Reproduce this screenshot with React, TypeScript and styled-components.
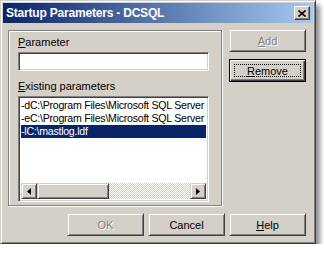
import React from "react";
import styled, { createGlobalStyle, css } from "styled-components";

const Global = createGlobalStyle`
  html, body { margin: 0; padding: 0; background: #ffffff; }
  body { font-family: "Liberation Sans", Arial, sans-serif; font-size: 11px; }
`;

const Window = styled.div`
  box-sizing: border-box;
  width: 316px;
  height: 244px;
  background: #d4d0c8;
  border-top: 1px solid #d4d0c8;
  border-left: 1px solid #d4d0c8;
  border-right: 1px solid #404040;
  border-bottom: 1px solid #404040;
  box-shadow: inset 1px 1px 0 #ffffff, inset -1px -1px 0 #808080, 4px 5px 5px rgba(0, 0, 0, 0.45);
  padding: 2px;
  display: flex;
  flex-direction: column;
`;

const TitleBar = styled.div`
  height: 20px;
  background: linear-gradient(to right, #0a246a, #a6caf0);
  display: flex;
  align-items: center;
  justify-content: space-between;
  padding: 0 3px 0 3px;
`;

const Title = styled.span`
  color: #ffffff;
  font-weight: bold;
  font-size: 12px;
  letter-spacing: -0.2px;
`;

const CloseBtn = styled.div`
  box-sizing: border-box;
  width: 16px;
  height: 14px;
  background: #d4d0c8;
  border-top: 1px solid #ffffff;
  border-left: 1px solid #ffffff;
  border-right: 1px solid #404040;
  border-bottom: 1px solid #404040;
  box-shadow: inset -1px -1px 0 #808080;
  display: flex;
  align-items: center;
  justify-content: center;
`;

const Content = styled.div`
  flex: 1;
  display: flex;
  flex-direction: column;
  padding: 5px 7px 0 5px;
`;

const TopRow = styled.div`
  display: flex;
  gap: 7px;
`;

const GroupBox = styled.div`
  box-sizing: border-box;
  width: 214px;
  height: 176px;
  margin-top: 2px;
  border: 1px solid #808080;
  box-shadow: 1px 1px 0 #ffffff, inset 1px 1px 0 #ffffff;
  padding: 5px 0 0 9px;
  display: flex;
  flex-direction: column;
`;

const Label = styled.div`
  color: #000000;
  height: 13px;
  line-height: 13px;
  margin-bottom: 3px;
  u { text-decoration: underline; }
`;

const sunken = css`
  box-sizing: border-box;
  background: #ffffff;
  border-top: 1px solid #808080;
  border-left: 1px solid #808080;
  border-right: 1px solid #ffffff;
  border-bottom: 1px solid #ffffff;
  box-shadow: inset 1px 1px 0 #404040, inset -1px -1px 0 #d4d0c8;
`;

const Input = styled.div`
  ${sunken};
  width: 191px;
  height: 19px;
  margin-bottom: 9px;
`;

const ListBox = styled.div`
  ${sunken};
  width: 191px;
  height: 106px;
  padding: 2px;
  display: flex;
  flex-direction: column;
  overflow: hidden;
`;

const Items = styled.div`
  flex: 1;
  overflow: hidden;
`;

const Item = styled.div<{ $sel?: boolean }>`
  height: 13px;
  line-height: 13px;
  white-space: nowrap;
  font-size: 10.6px;
  letter-spacing: -0.25px;
  color: ${(p) => (p.$sel ? "#ffffff" : "#000000")};
  background: ${(p) => (p.$sel ? "#0a246a" : "transparent")};
`;

const ScrollBar = styled.div`
  height: 16px;
  display: flex;
  background-color: #f4f3ee;
  background-image: repeating-conic-gradient(#d4d0c8 0% 25%, #ffffff 0% 50%);
  background-size: 2px 2px;
`;

const raised = css`
  box-sizing: border-box;
  background: #d4d0c8;
  border-top: 1px solid #d4d0c8;
  border-left: 1px solid #d4d0c8;
  border-right: 1px solid #404040;
  border-bottom: 1px solid #404040;
  box-shadow: inset 1px 1px 0 #ffffff, inset -1px -1px 0 #808080;
`;

const ArrowBtn = styled.div`
  ${raised};
  width: 16px;
  height: 16px;
  display: flex;
  align-items: center;
  justify-content: center;
`;

const Thumb = styled.div`
  ${raised};
  width: 72px;
  height: 16px;
`;

const Track = styled.div`
  flex: 1;
`;

const ButtonCol = styled.div`
  display: flex;
  flex-direction: column;
  gap: 7px;
  padding-top: 1px;
`;

const Button = styled.div<{ $disabled?: boolean; $default?: boolean }>`
  ${raised};
  width: 77px;
  height: 23px;
  display: flex;
  align-items: center;
  justify-content: center;
  position: relative;
  color: ${(p) => (p.$disabled ? "#808080" : "#000000")};
  text-shadow: ${(p) => (p.$disabled ? "1px 1px 0 #ffffff" : "none")};
  ${(p) =>
    p.$default &&
    css`
      border: 1px solid #000000;
      box-shadow: inset 1px 1px 0 #ffffff, inset -1px -1px 0 #404040, inset -2px -2px 0 #808080;
    `}
  u { text-decoration: underline; }
`;

const Focus = styled.div`
  position: absolute;
  left: 4px;
  top: 4px;
  right: 4px;
  bottom: 4px;
  border: 1px dotted #000000;
`;

const BottomRow = styled.div`
  display: flex;
  justify-content: flex-end;
  gap: 4px;
  margin-top: 7px;
`;

const Left = () => (
  <svg width="4" height="7" viewBox="0 0 4 7">
    <path d="M4 0 L0 3.5 L4 7 Z" fill="#000" />
  </svg>
);
const Right = () => (
  <svg width="4" height="7" viewBox="0 0 4 7">
    <path d="M0 0 L4 3.5 L0 7 Z" fill="#000" />
  </svg>
);

export default function App() {
  return (
    <>
      <Global />
      <Window>
        <TitleBar>
          <Title>Startup Parameters - DCSQL</Title>
          <CloseBtn>
            <svg width="8" height="7" viewBox="0 0 8 7">
              <path d="M0.5 0.5 L7.5 6.5 M7.5 0.5 L0.5 6.5" stroke="#000" strokeWidth="1.6" />
            </svg>
          </CloseBtn>
        </TitleBar>
        <Content>
          <TopRow>
            <GroupBox>
              <Label>
                <u>P</u>arameter
              </Label>
              <Input />
              <Label>
                <u>E</u>xisting parameters
              </Label>
              <ListBox>
                <Items>
                  <Item>-dC:\Program Files\Microsoft SQL Server</Item>
                  <Item>-eC:\Program Files\Microsoft SQL Server</Item>
                  <Item $sel>-lC:\mastlog.ldf</Item>
                </Items>
                <ScrollBar>
                  <ArrowBtn>
                    <Left />
                  </ArrowBtn>
                  <Thumb />
                  <Track />
                  <ArrowBtn>
                    <Right />
                  </ArrowBtn>
                </ScrollBar>
              </ListBox>
            </GroupBox>
            <ButtonCol>
              <Button $disabled>
                <span>
                  <u>A</u>dd
                </span>
              </Button>
              <Button $default>
                <Focus />
                <span>
                  <u>R</u>emove
                </span>
              </Button>
            </ButtonCol>
          </TopRow>
          <BottomRow>
            <Button $disabled>OK</Button>
            <Button>Cancel</Button>
            <Button>
              <span>
                <u>H</u>elp
              </span>
            </Button>
          </BottomRow>
        </Content>
      </Window>
    </>
  );
}
